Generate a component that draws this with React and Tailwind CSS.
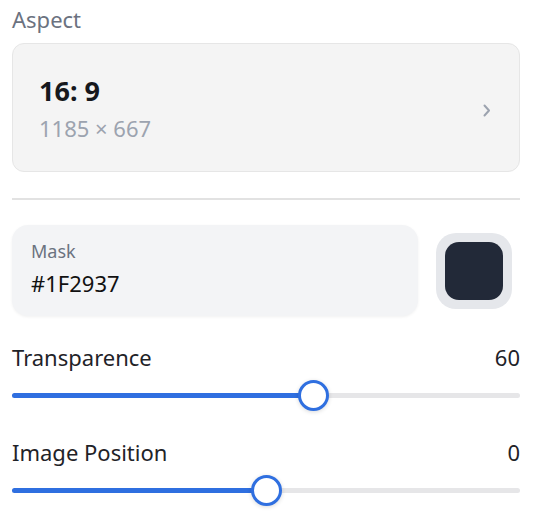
import React from "react";

function Chevron() {
  return (
    <svg width="8" height="13" viewBox="0 0 8 13" fill="none">
      <path d="M1.5 1.5L6 6.5L1.5 11.5" stroke="#9ca3af" strokeWidth="2" strokeLinecap="round" strokeLinejoin="round" />
    </svg>
  );
}

function Slider({ label, value, min, max }) {
  const pct = (value - min) / (max - min);
  return (
    <div>
      <div className="flex justify-between items-center h-[30px] text-[22px] leading-[30px] text-[#1f2328]">
        <span>{label}</span>
        <span>{value}</span>
      </div>
      <div className="relative h-[32px] mt-[7px] flex items-center">
        <div className="w-full h-[5px] rounded-full bg-[#e6e6e8]" />
        <div
          className="absolute left-0 h-[5px] rounded-full bg-[#2f6fe0]"
          style={{ width: `calc(${pct} * (100% - 31px) + 15px)` }}
        />
        <div
          className="absolute top-[0.5px] w-[31px] h-[31px] rounded-full bg-white border-[3px] border-[#2f6fe0] shadow-[0_1px_4px_rgba(0,0,0,0.15)]"
          style={{ left: `calc(${pct} * (100% - 31px))` }}
        />
      </div>
    </div>
  );
}

export default function App() {
  return (
    <div className="w-[536px] h-[514px] bg-white pl-3 pr-4 overflow-hidden font-['Noto_Sans',sans-serif]">
      <div className="pt-1 h-[34px] text-[22px] leading-[30px] text-[#6b7280]">Aspect</div>

      <div className="mt-[9px] h-[129px] rounded-[12px] border border-[#e6e6e6] bg-[#f4f4f4] flex items-center justify-between pl-[26px] pr-[28px]">
        <div className="flex flex-col gap-[7px] pt-[2px]">
          <div className="text-[27px] leading-[32px] font-bold text-[#16181d]">16: 9</div>
          <div className="text-[22px] leading-[28px] text-[#9ca3af]">1185 × 667</div>
        </div>
        <div className="mt-[5px]">
          <Chevron />
        </div>
      </div>

      <div className="mt-[26px] h-[2px] bg-[#e2e2e2]" />

      <div className="mt-[25px] flex items-center gap-[18px]">
        <div className="flex-1 h-[91px] rounded-[16px] bg-[#f3f4f6] shadow-[0_1px_3px_rgba(0,0,0,0.06)] pl-[19px] pt-[14px]">
          <div className="text-[18px] leading-[24px] text-[#6b7280]">Mask</div>
          <div className="mt-[5px] text-[22px] leading-[30px] text-[#111]">#1F2937</div>
        </div>
        <div className="mr-[8px] w-[76px] h-[76px] rounded-[20px] bg-[#e5e7eb] flex items-center justify-center">
          <div className="w-[58px] h-[58px] rounded-[14px] bg-[#222938]" />
        </div>
      </div>

      <div className="mt-[26px]">
        <Slider label="Transparence" value={60} min={0} max={100} />
      </div>
      <div className="mt-[26px]">
        <Slider label="Image Position" value={0} min={-100} max={100} />
      </div>
    </div>
  );
}
